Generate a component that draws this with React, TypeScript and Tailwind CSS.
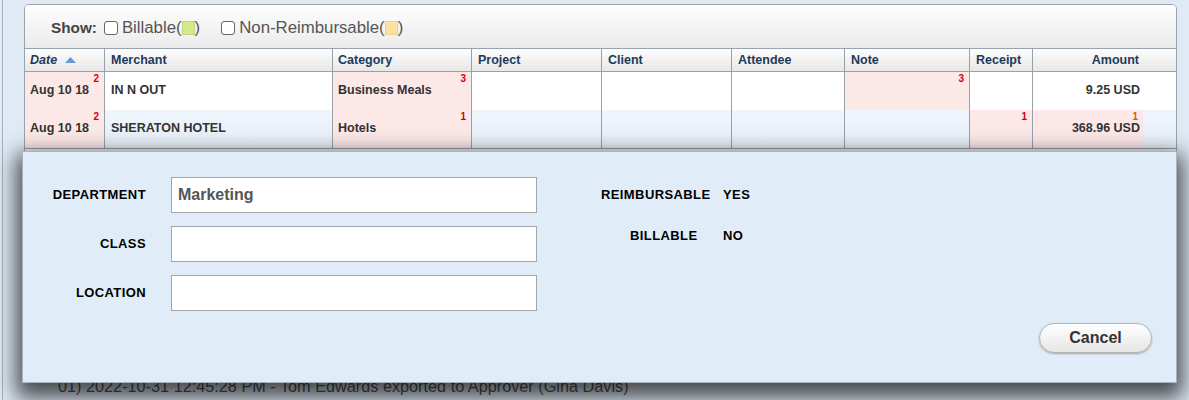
import React from 'react'

type Cell = { text?: string; sup?: string; pink?: boolean }

const font = { fontFamily: '"Liberation Sans", Arial, sans-serif' }

function Sup({ n, className = '' }: { n: string; className?: string }) {
  return (
    <span className={`absolute top-[2px] right-[5px] text-[10px] font-bold leading-none text-[#d40000] ${className}`}>{n}</span>
  )
}

function Checkbox() {
  return <span className="inline-block w-[14px] h-[14px] rounded-[3px] border border-[#666] bg-white" />
}

function Row({ cells, alt }: { cells: Cell[]; alt?: boolean }) {
  const widths = ['w-[80px]', 'w-[228px]', 'w-[139px]', 'w-[130px]', 'w-[130px]', 'w-[113px]', 'w-[125px]', 'w-[63px]']
  const pads = ['pl-[5px]', 'pl-[6px]', 'pl-[5px]', 'pl-[6px]', 'pl-[6px]', 'pl-[6px]', 'pl-[6px]', 'pl-[6px]']
  const base = alt ? 'bg-gradient-to-b from-[#eef5fc] to-[#e7eff8]' : 'bg-white'
  const amount = cells[8]
  return (
    <div className={`flex h-[38px] ${base}`}>
      {cells.slice(0, 8).map((c, i) => (
        <div
          key={i}
          className={`relative shrink-0 ${widths[i]} ${pads[i]} pt-[11px] border-r border-[#98a0aa] ${c.pink ? 'bg-[#fde8e8]' : ''}`}
        >
          {c.text && <span className="block text-[12.5px] leading-[14px] font-bold text-[#333]">{c.text}</span>}
          {c.sup && <Sup n={c.sup} />}
        </div>
      ))}
      <div className={`relative shrink-0 w-[110px] pr-[3px] pt-[11px] text-right ${amount.pink ? 'bg-[#fde8e8]' : ''}`}>
        <span className="block text-[12.5px] leading-[14px] font-bold text-[#333]">{amount.text}</span>
        {amount.sup && <Sup n={amount.sup} className="right-[4px] text-[#e05a00]" />}
      </div>
      <div className="flex-1" />
    </div>
  )
}

function FieldRow({ label, value }: { label: string; value?: string }) {
  return (
    <div className="flex items-center gap-[25px]">
      <div className="w-[123px] text-right text-[13px] tracking-[0.4px] font-bold text-black">{label}</div>
      <div className="w-[366px] h-[36px] border border-[#a3a7ab] bg-white pl-[6px] flex items-center">
        {value && <span className="text-[16px] font-bold text-[#555]">{value}</span>}
      </div>
    </div>
  )
}

export default function App() {
  const headers = [
    { label: 'Date', w: 'w-[80px]', pad: 'pl-[5px]' },
    { label: 'Merchant', w: 'w-[228px]', pad: 'pl-[6px]' },
    { label: 'Category', w: 'w-[139px]', pad: 'pl-[5px]' },
    { label: 'Project', w: 'w-[130px]', pad: 'pl-[6px]' },
    { label: 'Client', w: 'w-[130px]', pad: 'pl-[6px]' },
    { label: 'Attendee', w: 'w-[113px]', pad: 'pl-[6px]' },
    { label: 'Note', w: 'w-[125px]', pad: 'pl-[6px]' },
    { label: 'Receipt', w: 'w-[63px]', pad: 'pl-[6px]' },
  ]

  const row1: Cell[] = [
    { text: 'Aug 10 18', sup: '2', pink: true },
    { text: 'IN N OUT' },
    { text: 'Business Meals', sup: '3', pink: true },
    {},
    {},
    {},
    { sup: '3', pink: true },
    {},
    { text: '9.25 USD' },
  ]
  const row2: Cell[] = [
    { text: 'Aug 10 18', sup: '2', pink: true },
    { text: 'SHERATON HOTEL' },
    { text: 'Hotels', sup: '1', pink: true },
    {},
    {},
    {},
    {},
    { sup: '1', pink: true },
    { text: '368.96 USD', sup: '1', pink: true },
  ]

  return (
    <div className="relative h-[400px] w-full overflow-hidden bg-[#dfeaf5] pl-[2px]" style={font}>
      <div className="h-full border-l border-[#a9b1b9] pl-[21px] pt-[4px] pr-[12px]">
        <div className="w-[1153px] rounded-t-[5px] border border-[#98a3ae] bg-white overflow-hidden">
          <div className="h-[44px] flex items-center pl-[26px] pt-[3px] bg-gradient-to-b from-[#fefefe] to-[#ebebeb] border-b border-[#98a3ae]">
            <span className="text-[15.3px] font-bold text-[#444]">Show:</span>
            <span className="ml-[7px] flex"><Checkbox /></span>
            <span className="ml-[4px] flex items-center text-[16.8px] text-[#555]">
              Billable(
              <span className="inline-block w-[13px] h-[14px] bg-[#d5e88a] border border-[#c3d47a]" />)
            </span>
            <span className="ml-[21px] flex"><Checkbox /></span>
            <span className="ml-[4px] flex items-center text-[16.8px] text-[#555]">
              Non-Reimbursable(
              <span className="inline-block w-[13px] h-[14px] bg-[#fde0a0] border border-[#ecd08f]" />)
            </span>
          </div>

          <div className="flex h-[23px] border-b border-[#98a0aa] bg-gradient-to-b from-[#fdfdfd] to-[#e7e7e7]">
            {headers.map((h, i) => (
              <div
                key={h.label}
                className={`shrink-0 ${h.w} ${h.pad} border-r border-[#98a0aa] flex items-center text-[12.5px] font-bold text-[#1d3a5a]`}
              >
                {i === 0 ? (
                  <span className="flex items-center gap-[8px]">
                    <span className="italic">Date</span>
                    <svg width="11" height="6" viewBox="0 0 11 6">
                      <path d="M0 6 L5.5 0 L11 6 Z" fill="#6a9ad4" />
                    </svg>
                  </span>
                ) : (
                  h.label
                )}
              </div>
            ))}
            <div className="flex-1 flex items-center justify-end pr-[37px] text-[12.5px] font-bold text-[#1d3a5a]">
              Amount
            </div>
          </div>

          <Row cells={row1} />
          <Row cells={row2} alt />
          <div className="h-[230px] bg-[#f4f6f8] border-t border-[#98a0aa]" />
        </div>
      </div>

      <div className="absolute left-[58px] top-[377px] text-[16.25px] leading-[18px] text-[#555] whitespace-nowrap">
        01) 2022-10-31 12:45:28 PM - Tom Edwards exported to Approver (Gina Davis)
      </div>

      <div className="absolute left-[22px] top-[151px] w-[1155px] h-[232px] bg-[#e0edf8] border border-[#a7b3bf] shadow-[0_9px_20px_6px_rgba(0,0,0,0.68)]">
        <div className="flex pt-[25px]">
          <div className="flex flex-col gap-[13px]">
            <FieldRow label="DEPARTMENT" value="Marketing" />
            <FieldRow label="CLASS" />
            <FieldRow label="LOCATION" />
          </div>
          <div className="ml-[64px] flex flex-col gap-[5px] text-[13px] tracking-[0.4px] font-bold text-black">
            <div className="flex items-center h-[36px]">
              <span className="w-[122px]">REIMBURSABLE</span>
              <span>YES</span>
            </div>
            <div className="flex items-center h-[36px]">
              <span className="w-[122px] pl-[29px]">BILLABLE</span>
              <span>NO</span>
            </div>
          </div>
        </div>
        <div className="absolute right-[24px] bottom-[29px]">
          <button className="w-[113px] h-[30px] rounded-full border border-[#b4b4b4] bg-gradient-to-b from-[#ffffff] to-[#e6e6e6] shadow-[0_1px_2px_rgba(0,0,0,0.3)] text-[16px] font-bold text-[#333]">
            Cancel
          </button>
        </div>
      </div>
    </div>
  )
}
